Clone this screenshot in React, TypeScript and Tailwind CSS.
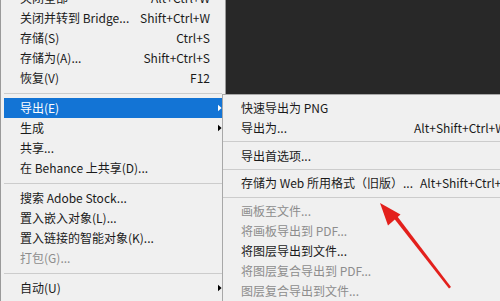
type Item =
  | { kind: 'sep' }
  | { kind: 'item'; label: string; shortcut?: string; sub?: boolean; disabled?: boolean; active?: boolean }

const mainItems: Item[] = [
  { kind: 'item', label: '关闭全部', shortcut: 'Alt+Ctrl+W' },
  { kind: 'item', label: '关闭并转到 Bridge...', shortcut: 'Shift+Ctrl+W' },
  { kind: 'item', label: '存储(S)', shortcut: 'Ctrl+S' },
  { kind: 'item', label: '存储为(A)...', shortcut: 'Shift+Ctrl+S' },
  { kind: 'item', label: '恢复(V)', shortcut: 'F12' },
  { kind: 'sep' },
  { kind: 'item', label: '导出(E)', sub: true, active: true },
  { kind: 'item', label: '生成', sub: true },
  { kind: 'item', label: '共享...' },
  { kind: 'item', label: '在 Behance 上共享(D)...' },
  { kind: 'sep' },
  { kind: 'item', label: '搜索 Adobe Stock...' },
  { kind: 'item', label: '置入嵌入对象(L)...' },
  { kind: 'item', label: '置入链接的智能对象(K)...' },
  { kind: 'item', label: '打包(G)...', disabled: true },
  { kind: 'sep' },
  { kind: 'item', label: '自动(U)', sub: true },
]

type SubItem =
  | { kind: 'sep' }
  | { kind: 'item'; label: string; shortcut?: string; labelW?: string; disabled?: boolean }

const subItems: SubItem[] = [
  { kind: 'item', label: '快速导出为 PNG' },
  { kind: 'item', label: '导出为...', shortcut: 'Alt+Shift+Ctrl+W', labelW: 'w-[173px]' },
  { kind: 'sep' },
  { kind: 'item', label: '导出首选项...' },
  { kind: 'sep' },
  { kind: 'item', label: '存储为 Web 所用格式（旧版）...', shortcut: 'Alt+Shift+Ctrl+S', labelW: 'w-[179px]' },
  { kind: 'sep' },
  { kind: 'item', label: '画板至文件...', disabled: true },
  { kind: 'item', label: '将画板导出到 PDF...', disabled: true },
  { kind: 'item', label: '将图层导出到文件...' },
  { kind: 'item', label: '将图层复合导出到 PDF...', disabled: true },
  { kind: 'item', label: '图层复合导出到文件...', disabled: true },
]

function Arrow({ white }: { white?: boolean }) {
  return (
    <svg width="5" height="8" viewBox="0 0 5 8" className="ml-[8px]">
      <polygon points="0,0 4.5,4 0,8" fill={white ? '#ffffff' : '#000000'} />
    </svg>
  )
}

function Separator() {
  return (
    <div className="h-[10px] flex items-center">
      <div className="w-full h-px bg-[#cccccc]" />
    </div>
  )
}

export default function App() {
  return (
    <div
      className="relative w-[500px] h-[301px] overflow-hidden flex bg-[#282828] text-[12px] text-[#1a1a1a]"
      style={{ fontFamily: '"Noto Sans CJK SC", "Noto Sans", sans-serif' }}
    >
      {/* main file menu */}
      <div className="w-[226px] h-full shrink-0 bg-[#f0f0f0] border-x border-[#9a9a9a] px-[3px]">
        <div className="-mt-[12px] flex flex-col">
          {mainItems.map((it, i) =>
            it.kind === 'sep' ? (
              <Separator key={i} />
            ) : (
              <div
                key={i}
                className={`h-[20px] flex items-center pl-[16px] whitespace-nowrap ${
                  it.active ? 'bg-[#1374d5] text-white' : it.disabled ? 'text-[#8d8d8d]' : ''
                }`}
              >
                <span className="flex-1">{it.label}</span>
                {it.shortcut && <span>{it.shortcut}</span>}
                <span className="w-[12px] flex items-center">{it.sub && <Arrow white={it.active} />}</span>
              </div>
            )
          )}
        </div>
      </div>

      {/* canvas area */}
      <div className="flex-1 h-full bg-[#282828]" />

      {/* export submenu */}
      <div className="absolute left-[222px] top-[94px] right-0 bottom-0 bg-[#f0f0f0] border-l border-t border-[#a8a8a8] pt-[3px] flex flex-col">
        {subItems.map((it, i) =>
          it.kind === 'sep' ? (
            <Separator key={i} />
          ) : (
            <div
              key={i}
              className={`h-[20px] shrink-0 flex items-center pl-[18px] whitespace-nowrap ${
                it.disabled ? 'text-[#8d8d8d]' : ''
              }`}
            >
              <span className={`${it.labelW ?? ''} shrink-0`}>{it.label}</span>
              {it.shortcut && <span className="shrink-0">{it.shortcut}</span>}
            </div>
          )
        )}
      </div>

      {/* red annotation arrow */}
      <svg className="absolute left-0 top-0 pointer-events-none" width="500" height="301" viewBox="0 0 500 301">
        <polygon points="392.5,216.5 395.5,214 451,287 449,288.5" fill="#e3201c" />
        <polygon points="380,203 400.5,214.5 388,225.5" fill="#e3201c" />
      </svg>
    </div>
  )
}
